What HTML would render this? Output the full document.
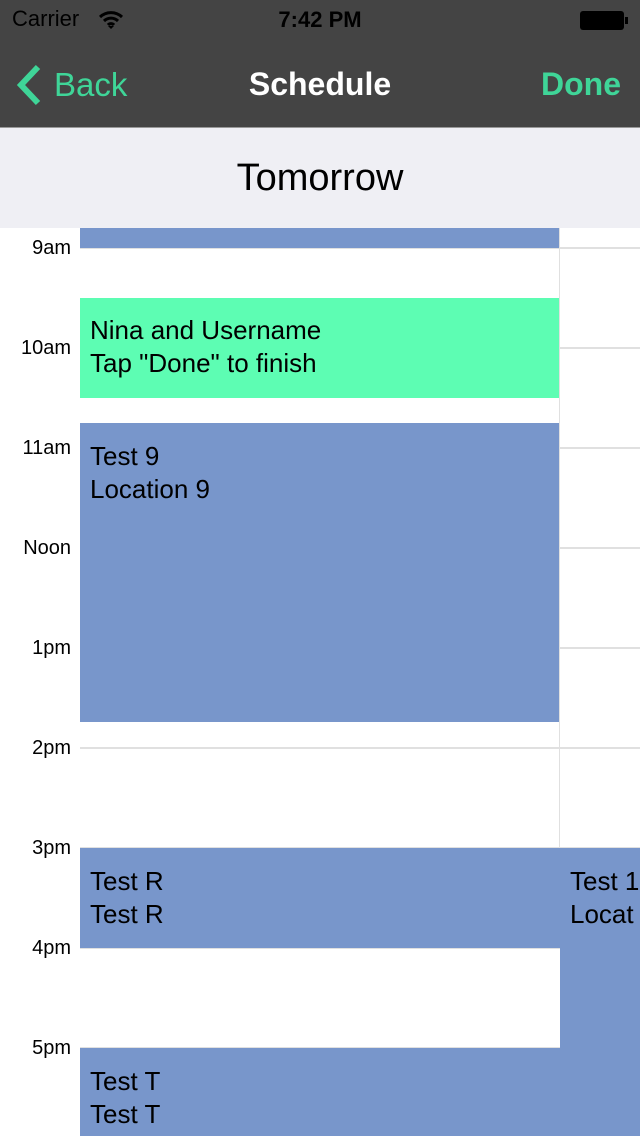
<!DOCTYPE html>
<html><head><meta charset="utf-8"><style>
*{margin:0;padding:0;box-sizing:border-box}
body{width:640px;height:1136px;overflow:hidden;background:#fff;font-family:"Liberation Sans",sans-serif;position:relative}
.abs{position:absolute}
.nav{left:0;top:0;width:640px;height:128px;background:#444;border-bottom:1px solid #999}
.band{left:0;top:128px;width:640px;height:100px;background:#efeff4}
.hl{left:80px;width:560px;height:2px;background:#e0e0e0}
.lab{left:0;width:71px;text-align:right;font-size:20px;color:#000}
.ev{background:#7896cb;font-size:26px;color:#000;padding:5px 10px;line-height:33px}
</style></head><body>
<div class="abs nav"></div>
<div class="abs" style="left:12px;top:6px;font-size:22px;color:#000">Carrier</div>
<svg class="abs" style="left:98px;top:10px" width="26" height="20" viewBox="0 0 26 20"><path d="M2 7a16 16 0 0 1 22 0M6 11a10 10 0 0 1 14 0M10 15a4 4 0 0 1 6 0" stroke="#000" stroke-width="3" fill="none"/><path d="M10 16l3 3 3-3z" fill="#000"/></svg>
<div class="abs" style="left:0;width:640px;top:7px;text-align:center;font-size:22px;font-weight:bold;color:#000">7:42 PM</div>
<div class="abs" style="left:580px;top:11px;width:44px;height:19px;background:#000;border-radius:3px"></div>
<div class="abs" style="left:625px;top:17px;width:3px;height:7px;background:#000"></div>
<svg class="abs" style="left:14px;top:64px" width="30" height="42" viewBox="0 0 30 42"><path d="M24 3L7 21l17 18" stroke="#3fd598" stroke-width="6" fill="none"/></svg>
<div class="abs" style="left:54px;top:66px;font-size:33px;color:#3fd598">Back</div>
<div class="abs" style="left:0;width:640px;top:66px;text-align:center;font-size:32px;font-weight:bold;color:#fff">Schedule</div>
<div class="abs" style="left:541px;top:66px;font-size:32px;font-weight:bold;color:#3fd598">Done</div>
<div class="abs band"></div>
<div class="abs" style="left:0;width:640px;top:157px;text-align:center;font-size:38px;color:#000">Tomorrow</div>
<div class="abs" style="left:559px;top:228px;width:1px;height:620px;background:#e0e0e0"></div>
<div class="abs hl" style="top:247px"></div><div class="abs hl" style="top:347px"></div><div class="abs hl" style="top:447px"></div><div class="abs hl" style="top:547px"></div><div class="abs hl" style="top:647px"></div><div class="abs hl" style="top:747px"></div><div class="abs hl" style="top:847px"></div><div class="abs hl" style="top:947px"></div><div class="abs hl" style="top:1047px"></div>
<div class="abs lab" style="top:237px">9am</div>
<div class="abs lab" style="top:337px">10am</div>
<div class="abs lab" style="top:437px">11am</div>
<div class="abs lab" style="top:537px">Noon</div>
<div class="abs lab" style="top:637px">1pm</div>
<div class="abs lab" style="top:737px">2pm</div>
<div class="abs lab" style="top:837px">3pm</div>
<div class="abs lab" style="top:937px">4pm</div>
<div class="abs lab" style="top:1037px">5pm</div>
<div class="abs ev" style="left:80px;top:228px;width:479px;height:20px;padding:0"></div>
<div class="abs ev" style="left:80px;top:298px;width:479px;height:100px;background:#5dfdb3;padding-top:16px">Nina and Username<br>Tap "Done" to finish</div>
<div class="abs ev" style="left:80px;top:423px;width:479px;height:299px;padding-top:17px">Test 9<br>Location 9</div>
<div class="abs ev" style="left:80px;top:848px;width:480px;height:100px;padding-top:17px">Test R<br>Test R</div>
<div class="abs ev" style="left:560px;top:848px;width:80px;height:288px;padding-top:17px;white-space:nowrap;overflow:hidden">Test 1<br>Locat</div>
<div class="abs ev" style="left:80px;top:1048px;width:480px;height:88px;padding-top:17px">Test T<br>Test T</div>
</body></html>
